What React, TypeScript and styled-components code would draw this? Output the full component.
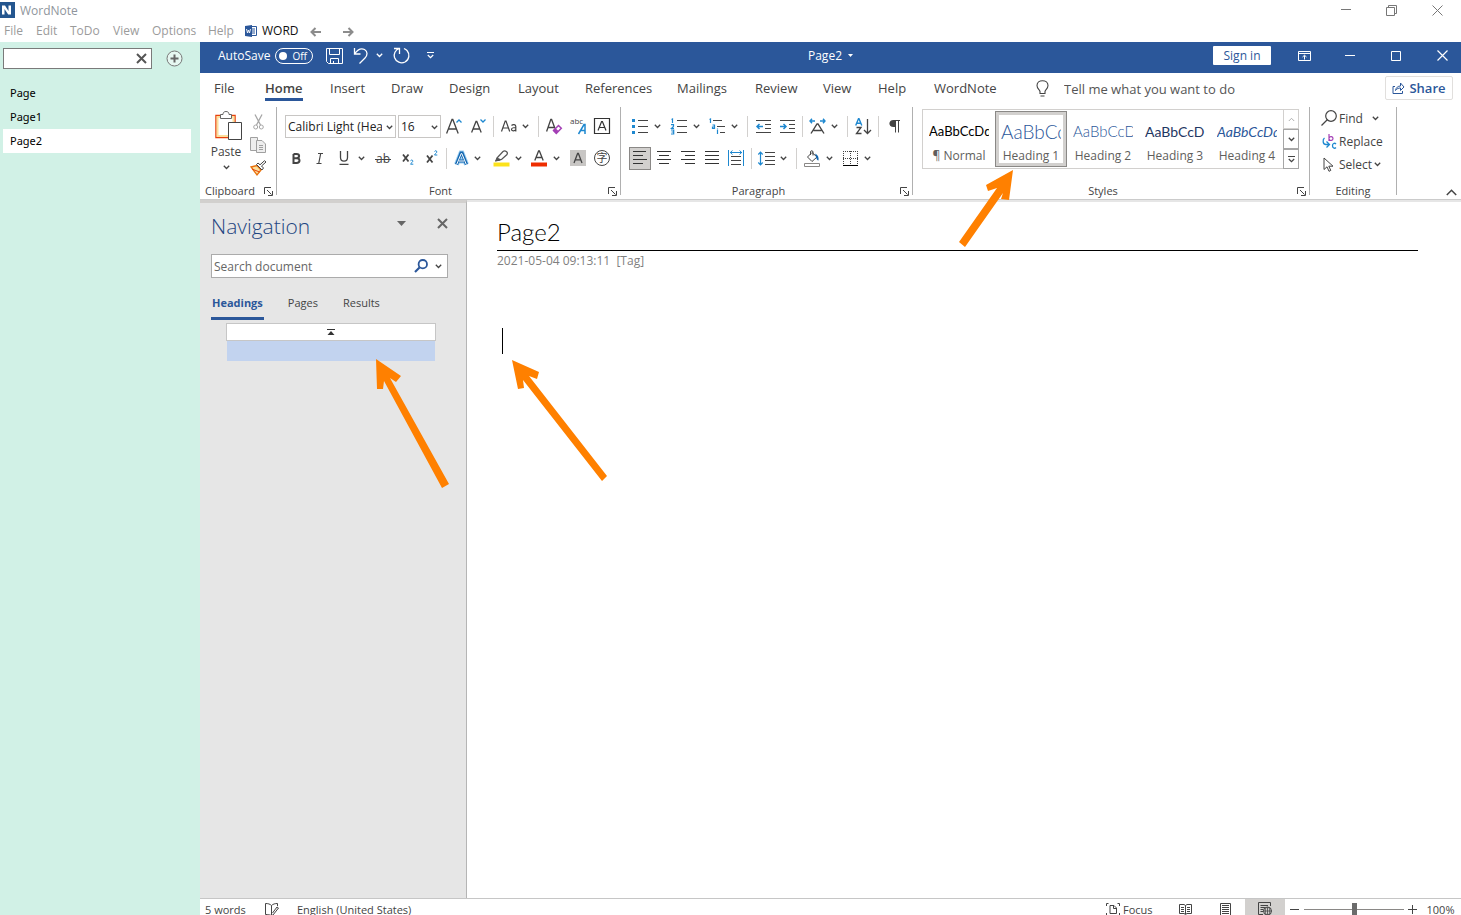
import React from "react";
import styled, { createGlobalStyle } from "styled-components";

const BLUE = "#2b579a";
const ACCENT = "#1e88d0";
const INK = "#444444";
const UI = '"Open Sans", "Noto Sans", sans-serif';
const DOC = 'Lato, "Open Sans", sans-serif';
const CJK = '"Noto Sans CJK SC", sans-serif';

const Global = createGlobalStyle`
  *, *::before, *::after { box-sizing: border-box; }
  body { margin: 0; font-family: ${UI}; font-size: 12px; color: ${INK}; background: #fff; }
  button, input, select { font: inherit; color: inherit; }
  svg { display: block; flex: none; overflow: visible; }
`;

const App_ = styled.div`
  display: flex;
  flex-direction: column;
  height: 100vh;
  overflow: hidden;
  position: relative;
`;

const PlainButton = styled.button`
  display: flex;
  align-items: center;
  border: 0;
  padding: 0;
  background: none;
  white-space: nowrap;
  flex: none;
`;

/* Outer window */
const OuterTitle = styled.header`
  display: flex;
  align-items: center;
  height: 20px;
  gap: 5px;
  color: #8f959c;
  background: #fff;
`;
const OuterControls = styled.div`
  display: flex;
  margin-left: auto;
  height: 18px;
`;
const WindowButton = styled(PlainButton)<{ $w: number }>`
  width: ${(p) => p.$w}px;
  height: 100%;
  justify-content: center;
`;
const MenuBar = styled.nav`
  display: flex;
  align-items: center;
  height: 22px;
  color: #9b9b9b;
  padding-left: 4px;
`;
const MenuItem = styled(PlainButton)<{ $w: number; $dark?: boolean }>`
  width: ${(p) => p.$w}px;
  gap: 5px;
  line-height: 18px;
  color: ${(p) => (p.$dark ? "#111" : "#9b9b9b")};
`;

const Body = styled.div`
  display: flex;
  flex: 1;
  min-height: 0;
`;

/* Page list */
const Sidebar = styled.aside`
  width: 200px;
  flex: none;
  background: #d1f1e6;
  padding: 6px 9px 0 3px;
  color: #000;
`;
const SideTop = styled.div`
  display: flex;
  align-items: center;
  gap: 14px;
  height: 21px;
`;
const SideSearch = styled.div`
  display: flex;
  align-items: center;
  width: 149px;
  height: 21px;
  border: 1px solid #7a7a7a;
  background: #fff;
  padding-right: 4px;
`;
const BareInput = styled.input`
  flex: 1;
  min-width: 0;
  border: 0;
  outline: 0;
  background: transparent;
  padding: 0 2px;
  &::placeholder { color: #666; opacity: 1; }
`;
const PageList = styled.ul`
  list-style: none;
  margin: 12px 0 0;
  padding: 0;
`;
const PageItem = styled.li<{ $on?: boolean }>`
  background: ${(p) => (p.$on ? "#fff" : "transparent")};
`;
const PageLink = styled.a`
  display: block;
  height: 24px;
  line-height: 24px;
  padding-left: 7px;
  font-family: "Noto Sans", sans-serif;
  font-size: 11px;
  color: #000;
  text-decoration: none;
`;

/* Word window */
const Word = styled.main`
  display: flex;
  flex-direction: column;
  flex: 1;
  min-width: 0;
  background: #fff;
`;
const TitleBar = styled.div`
  display: grid;
  grid-template-columns: 1fr auto 1fr;
  align-items: center;
  height: 31px;
  flex: none;
  background: ${BLUE};
  color: #fff;
  padding-bottom: 4px;
`;
const Quick = styled.div`
  display: flex;
  align-items: center;
  padding-left: 18px;
`;
const AutoSave = styled.label`
  display: flex;
  align-items: center;
  justify-content: space-between;
  width: 95px;
  margin-right: 8px;
`;
const Toggle = styled.span`
  display: flex;
  align-items: center;
  justify-content: space-between;
  width: 38px;
  height: 16px;
  padding: 0 5px 0 3px;
  border: 1px solid #fff;
  border-radius: 8px;
  font-size: 10px;
  line-height: 14px;
`;
const ToggleInput = styled.input`
  appearance: none;
  margin: 0;
  width: 8px;
  height: 8px;
  border-radius: 50%;
  background: #fff;
`;
const QuickButton = styled(PlainButton)<{ $w: number }>`
  width: ${(p) => p.$w}px;
  height: 26px;
  justify-content: center;
`;
const DocName = styled(PlainButton)`
  gap: 6px;
  color: #fff;
`;
const TitleRight = styled.div`
  display: flex;
  align-items: center;
  justify-content: flex-end;
  gap: 8px;
  height: 27px;
`;
const SignIn = styled(PlainButton)`
  justify-content: center;
  width: 58px;
  height: 19px;
  margin-right: 6px;
  border-radius: 1px;
  background: #fff;
  color: ${BLUE};
`;

const Tabs = styled.nav`
  display: flex;
  height: 31px;
  flex: none;
  padding: 0 8px 0 14px;
  font-size: 13px;
`;
const Tab = styled(PlainButton)<{ $w: number; $on?: boolean }>`
  width: ${(p) => p.$w}px;
  align-items: flex-start;
  font-weight: ${(p) => (p.$on ? 600 : 400)};
`;
const TabText = styled.span<{ $on?: boolean }>`
  height: 28px;
  line-height: 30px;
  border-bottom: 3px solid ${(p) => (p.$on ? BLUE : "transparent")};
`;
const TellMe = styled.label`
  display: flex;
  align-items: center;
  gap: 15px;
  flex: 1;
  height: 31px;
  padding-left: 21px;
`;
const TellInput = styled(BareInput)`
  padding: 0;
  &::placeholder { color: #555; }
`;
const Share = styled(PlainButton)`
  gap: 4px;
  justify-content: center;
  width: 68px;
  height: 24px;
  margin-top: 3px;
  border: 1px solid #e1dfdd;
  border-radius: 2px;
  color: ${BLUE};
  font-weight: 600;
`;

/* Ribbon */
const Ribbon = styled.section`
  display: flex;
  align-items: flex-start;
  flex: none;
  height: 96px;
  padding-top: 3px;
  border-bottom: 1px solid #cbcbcb;
`;
const Group = styled.div<{ $w: number }>`
  width: ${(p) => p.$w}px;
  height: 92px;
  flex: none;
  display: flex;
  flex-direction: column;
`;
const Divider = styled.div`
  width: 1px;
  height: 88px;
  flex: none;
  background: #b0b0b0;
`;
const GroupBody = styled.div<{ $pad: string }>`
  flex: 1;
  padding: ${(p) => p.$pad};
`;
const GroupFoot = styled.div`
  display: flex;
  align-items: center;
  height: 16px;
`;
const GroupName = styled.div`
  flex: 1;
  text-align: center;
  font-size: 11px;
  line-height: 16px;
`;
const Launcher = styled(PlainButton)`
  width: 16px;
  height: 16px;
  justify-content: center;
`;
const Row = styled.div`
  display: flex;
  align-items: center;
  height: 24px;
  margin-bottom: 8px;
`;
const Sep = styled.div`
  width: 1px;
  height: 21px;
  margin: 0 3px;
  flex: none;
  background: #d2d0ce;
`;
const Tool = styled(PlainButton)<{ $w?: number; $on?: boolean }>`
  justify-content: center;
  width: ${(p) => (p.$on ? 22 : p.$w ?? 24)}px;
  height: 23px;
  ${(p) => p.$on && "margin: 0 1px 0 2px; background: #d2d0ce; border: 1px solid #8a8886;"}
`;
const SplitBox = styled(PlainButton)<{ $w: number }>`
  width: ${(p) => p.$w}px;
  height: 23px;
`;
const SplitIcon = styled.span<{ $w: number }>`
  display: flex;
  justify-content: center;
  width: ${(p) => p.$w}px;
`;
const Combo = styled.span<{ $w: number }>`
  position: relative;
  display: block;
  flex: none;
  width: ${(p) => p.$w}px;
  height: 23px;
  margin-right: 2px;
  &:last-of-type { margin-right: 0; }
`;
const ComboSelect = styled.select`
  appearance: none;
  width: 100%;
  height: 23px;
  padding: 0 13px 0 2px;
  border: 1px solid #c8c6c4;
  border-radius: 0;
  background: #fff;
  color: #222;
`;
const ComboArrow = styled.span`
  position: absolute;
  right: 3px;
  top: 10px;
  pointer-events: none;
`;

const ClipRow = styled.div`
  display: flex;
  justify-content: space-between;
`;
const PasteButton = styled(PlainButton)`
  flex-direction: column;
  width: 32px;
  line-height: 16px;
`;
const PasteIcon = styled.span`
  padding-left: 4px;
`;
const PasteText = styled.span`
  margin: 3px 0 5px;
`;
const ClipTools = styled.div`
  display: flex;
  flex-direction: column;
`;

const Gallery = styled.div`
  display: flex;
  width: 377px;
  height: 60px;
  border: 1px solid #d2d0ce;
`;
const StyleItem = styled(PlainButton)<{ $on?: boolean }>`
  flex-direction: column;
  width: 72px;
  height: 56px;
  margin-top: 1px;
  padding: ${(p) => (p.$on ? "5px" : "6px")} 3px 0;
  color: #605e5c;
  overflow: hidden;
  ${(p) => p.$on && "border: 1px solid #8a8886; box-shadow: inset 0 0 0 3px #d2d0ce;"}
`;
const Sample = styled.span<{ $c: string; $size: number; $italic?: boolean; $light?: boolean }>`
  width: 60px;
  height: 30px;
  line-height: 29px;
  overflow: hidden;
  text-align: left;
  font-family: ${DOC};
  font-size: ${(p) => p.$size}px;
  font-style: ${(p) => (p.$italic ? "italic" : "normal")};
  font-weight: ${(p) => (p.$light ? 300 : 400)};
  color: ${(p) => p.$c};
`;
const SampleName = styled.span`
  line-height: 18px;
`;
const GalleryScroll = styled.div`
  display: flex;
  flex-direction: column;
  margin: -1px -1px -1px auto;
  width: 16px;
`;
const ScrollButton = styled(PlainButton)<{ $dim?: boolean }>`
  flex: 1;
  justify-content: center;
  border: 1px solid ${(p) => (p.$dim ? "#d2d0ce" : "#a6a6a6")};
`;
const EditButton = styled(PlainButton)`
  height: 22px;
  margin-bottom: 1px;
  gap: 2px;
`;
const EditIcon = styled.span`
  width: 16px;
  display: flex;
  justify-content: center;
`;
const EditText = styled.span<{ $gap: number }>`
  margin-right: ${(p) => p.$gap}px;
`;
const Collapse = styled(PlainButton)`
  margin: 82px 4px 0 auto;
`;

/* Panes */
const Panes = styled.div`
  display: flex;
  flex: 1;
  min-height: 0;
`;
const NavPane = styled.aside`
  width: 267px;
  flex: none;
  background: #e6e6e6;
  border-top: 3px solid #d2d0ce;
  border-right: 1px solid #b5b5b5;
  padding: 7px 18px 0 11px;
`;
const NavHead = styled.div`
  display: flex;
  align-items: center;
  height: 32px;
`;
const NavTitle = styled.h2`
  flex: 1;
  margin: 0;
  font-size: 21px;
  line-height: 32px;
  font-weight: 300;
  color: #1f4682;
`;
const NavButton = styled(PlainButton)<{ $w: number }>`
  width: ${(p) => p.$w}px;
  height: 24px;
  margin-bottom: 6px;
`;
const NavSearch = styled.div`
  display: flex;
  align-items: center;
  gap: 7px;
  height: 24px;
  margin-top: 12px;
  padding-right: 5px;
  border: 1px solid #ababab;
  background: #fff;
`;
const NavTabs = styled.div`
  display: flex;
  gap: 23px;
  margin-top: 10px;
`;
const NavTab = styled(PlainButton)<{ $on?: boolean }>`
  height: 32px;
  padding: 0 1px;
  font-size: 11px;
  color: ${(p) => (p.$on ? BLUE : INK)};
  font-weight: ${(p) => (p.$on ? 700 : 400)};
  border-bottom: 3px solid ${(p) => (p.$on ? BLUE : "transparent")};
`;
const Outline = styled.div`
  margin: 3px 12px 0 15px;
`;
const OutlineTop = styled(PlainButton)`
  justify-content: center;
  width: 100%;
  height: 18px;
  border: 1px solid #c6c6c6;
  background: #fff;
`;
const OutlineRow = styled.div`
  height: 20px;
  margin: 0 1px;
  background: #c2d3ef;
`;

const Doc = styled.article`
  flex: 1;
  border-top: 2px solid #e6e6e6;
  padding: 12px 43px 0 30px;
`;
const DocTitle = styled.h1`
  margin: 0;
  height: 37px;
  line-height: 36px;
  border-bottom: 1px solid #000;
  font-family: ${DOC};
  font-weight: 300;
  font-size: 24px;
  color: #000;
`;
const DocMeta = styled.p`
  margin: 2px 0 0;
  line-height: 16px;
  white-space: pre;
  color: #7f7f7f;
`;
const Caret = styled.div`
  width: 1px;
  height: 26px;
  margin: 59px 0 0 5px;
  background: #000;
`;

const Status = styled.footer`
  display: flex;
  align-items: flex-start;
  flex: none;
  height: 17px;
  border-top: 1px solid #c6c6c6;
  padding: 0 1px 0 5px;
  background: #fff;
  font-size: 11px;
  overflow: hidden;
`;
const StatusItem = styled(PlainButton)<{ $w: number; $on?: boolean; $center?: boolean }>`
  width: ${(p) => p.$w}px;
  height: 20px;
  gap: 3px;
  justify-content: ${(p) => (p.$center ? "center" : "flex-start")};
  background: ${(p) => (p.$on ? "#d2d0ce" : "none")};
`;
const StatusRight = styled.div`
  display: flex;
  margin-left: auto;
`;
const Zoom = styled.input`
  appearance: none;
  width: 100px;
  height: 20px;
  margin: 0;
  background: linear-gradient(#8a8886, #8a8886) center / 100% 1px no-repeat;
  &::-webkit-slider-thumb {
    appearance: none;
    width: 5px;
    height: 12px;
    background: #6b6b6b;
  }
`;

const ArrowLayer = styled.svg`
  position: absolute;
  pointer-events: none;
`;

/* Icons */
type LineProps = { w: number; h: number; d: string; c?: string; sw?: number; crisp?: boolean; children?: React.ReactNode };
const Ico = ({ w, h, d, c = INK, sw = 1, crisp, children }: LineProps) => (
  <svg width={w} height={h} viewBox={`0 0 ${w} ${h}`} fill="none" shapeRendering={crisp ? "crispEdges" : "auto"} aria-hidden>
    {d && <path d={d} stroke={c} strokeWidth={sw} />}
    {children}
  </svg>
);
const Chev = ({ c = INK }: { c?: string }) => <Ico w={7} h={5} d="M.8 .8 3.5 3.5 6.2 .8" c={c} sw={1.3} />;
const Split = ({ w, iw = 24, label, children }: { w: number; iw?: number; label: string; children: React.ReactNode }) => (
  <SplitBox $w={w} aria-label={label}>
    <SplitIcon $w={iw}>{children}</SplitIcon>
    <SplitIcon $w={10}><Chev /></SplitIcon>
  </SplitBox>
);
const Cross = ({ s, sw, c }: { s: number; sw: number; c: string }) => (
  <Ico w={s} h={s} d={`M1 1 ${s - 1} ${s - 1}M${s - 1} 1 1 ${s - 1}`} c={c} sw={sw} />
);
const Launch = ({ name }: { name: string }) => (
  <Launcher aria-label={`${name} settings`}>
    <Ico w={9} h={9} d="M.5 7V.5H7M3 3 7.5 7.5M8.5 4V8.5H4" />
  </Launcher>
);

const GLYPH: Record<string, string> = {
  A16: "M.6 15.5 6 1.5h.8L12.2 15.5M2.6 11H10",
  A13: "M.6 14.5 5 3.5h.8L10.2 14.5M2.2 11H8.6",
};

const Align = ({ lines }: { lines: [number, number][] }) => (
  <Ico w={16} h={14} d={lines.map(([a, b], i) => `M${a} ${0.5 + i * 4}H${b}`).join("")} c="#333" crisp />
);

const Foot = ({ name, launch = true }: { name: string; launch?: boolean }) => (
  <GroupFoot>
    <GroupName>{name}</GroupName>
    {launch && <Launch name={name} />}
  </GroupFoot>
);

const menus: [string, number][] = [["File", 32], ["Edit", 34], ["ToDo", 43], ["View", 39], ["Options", 56], ["Help", 37]];
const tabs: [string, number][] = [
  ["File", 51], ["Home", 65], ["Insert", 61], ["Draw", 58], ["Design", 69], ["Layout", 67],
  ["References", 92], ["Mailings", 78], ["Review", 68], ["View", 55], ["Help", 56], ["WordNote", 81],
];
const samples = [
  { name: "¶ Normal", c: "#000", size: 13, text: "AaBbCcDd" },
  { name: "Heading 1", c: BLUE, size: 19, text: "AaBbCc", light: true, on: true },
  { name: "Heading 2", c: BLUE, size: 15, text: "AaBbCcD", light: true },
  { name: "Heading 3", c: "#1f3763", size: 14, text: "AaBbCcD" },
  { name: "Heading 4", c: BLUE, size: 14, text: "AaBbCcDd", italic: true },
];
const arrows = [
  { x: 955, y: 165, w: 64, h: 86, p: "58,5 31,20 33,26 42,23 4,77 10,82 48,28 46,34 54,35" },
  { x: 370, y: 355, w: 84, h: 138, p: "6,4 31,21 26,27 20,23 79,129 72,133 14,26 13,34 7,34" },
  { x: 506, y: 354, w: 106, h: 132, p: "6,6 33,18 31,25 23,22 101,122 96,127 17,26 18,34 12,35" },
];

export default function App() {
  return (
    <App_>
      <Global />
      <OuterTitle>
        <svg width="15" height="16" viewBox="0 0 15 16" aria-hidden>
          <rect width="15" height="16" fill="#24568f" />
          <path d="M2 3.500H5L8.500 9V3.500H11V12.500H8.200L4.500 7V12.500H2Z" fill="#fff" />
        </svg>
        <span>WordNote</span>
        <OuterControls>
          <WindowButton $w={46} aria-label="Minimize"><Ico w={10} h={10} d="M0 4.500H10" c="#777" /></WindowButton>
          <WindowButton $w={45} aria-label="Restore"><Ico w={11} h={11} d="M.5 2.500H8.500V10.500H.5ZM2.500 2.500V.5H10.500V8.500H8.500" c="#777" /></WindowButton>
          <WindowButton $w={47} aria-label="Close"><Ico w={11} h={11} d="M.5 .5 10.500 10.500M10.500 .5 .5 10.500" c="#777" /></WindowButton>
        </OuterControls>
      </OuterTitle>
      <MenuBar>
        {menus.map(([m, w]) => <MenuItem key={m} $w={w}>{m}</MenuItem>)}
        <MenuItem $w={65} $dark>
          <svg width="12" height="12" viewBox="0 0 12 12" aria-hidden>
            <path d="M0 1 7 0V12L0 11Z" fill={BLUE} />
            <path d="M7 1.500H11.500V10.500H7M7 4H10M7 6H10M7 8H10" stroke={BLUE} fill="none" />
            <path d="M1.500 4 2.500 8 3.500 5 4.500 8 5.500 4" stroke="#fff" fill="none" strokeWidth=".9" />
          </svg>
          WORD
        </MenuItem>
        <MenuItem $w={33} aria-label="Back"><Ico w={11} h={10} d="M11 6H2M5.500 2 1.500 6 5.500 10" c="#8c8c8c" sw={2} /></MenuItem>
        <MenuItem $w={12} aria-label="Forward"><Ico w={11} h={10} d="M0 6H9M5.500 2 9.500 6 5.500 10" c="#8c8c8c" sw={2} /></MenuItem>
      </MenuBar>

      <Body>
        <Sidebar>
          <SideTop>
            <SideSearch>
              <BareInput aria-label="Filter pages" />
              <PlainButton aria-label="Clear"><Cross s={11} sw={2} c="#555" /></PlainButton>
            </SideSearch>
            <PlainButton aria-label="Add page">
              <Ico w={17} h={17} d="">
                <circle cx="8.500" cy="8.500" r="7.500" stroke="#777" fill="#e6f7f1" />
                <path d="M4.500 8.500H12.500M8.500 4.500V12.500" stroke="#666" strokeWidth="2" />
              </Ico>
            </PlainButton>
          </SideTop>
          <PageList>
            {["Page", "Page1", "Page2"].map((p) => (
              <PageItem key={p} $on={p === "Page2"}><PageLink href="#">{p}</PageLink></PageItem>
            ))}
          </PageList>
        </Sidebar>

        <Word>
          <TitleBar>
            <Quick>
              <AutoSave>
                AutoSave
                <Toggle><ToggleInput type="checkbox" />Off</Toggle>
              </AutoSave>
              <QuickButton $w={26} aria-label="Save">
                <Ico w={17} h={16} d="M.5 .5H16.500V15.500H2.500L.5 13.500ZM3.500 .5V6.500H13.500V.5M4.500 15.500V10.500H12.500V15.500M7.500 13V15.500" c="#fff" />
              </QuickButton>
              <QuickButton $w={29} aria-label="Undo">
                <Ico w={17} h={17} d="M1.500 1V7H7.500M1.500 7C5 2 8.500 1 11.500 2.500 15 4.500 14.500 8.500 12 11L6.500 16.500" c="#fff" sw={1.3} />
              </QuickButton>
              <Chev c="#fff" />
              <QuickButton $w={36} aria-label="Redo">
                <Ico w={17} h={17} d="M1 1.500H6.500V7M6.500 1.500C2 3 .5 7 1.500 10.500 3 15 8 17 12 15 16.500 12.500 17 7 14 3.500 13 2.500 12 2 11 1.500" c="#fff" sw={1.3} />
              </QuickButton>
              <QuickButton $w={22} aria-label="Customize toolbar">
                <Ico w={7} h={7} d="M0 .5H7M.8 3 3.500 5.700 6.200 3" c="#fff" sw={1.2} />
              </QuickButton>
            </Quick>
            <DocName>
              Page2
              <svg width="5" height="3" viewBox="0 0 5 3" aria-hidden><path d="M0 0H5L2.500 3Z" fill="#fff" /></svg>
            </DocName>
            <TitleRight>
              <SignIn>Sign in</SignIn>
              <WindowButton $w={38} aria-label="Ribbon display options">
                <Ico w={13} h={10} d="M.5 .5H12.500V9.500H.5ZM.5 2.500H12.500M6.500 8.500V4.500M4.500 6 6.500 4.200 8.500 6" c="#fff" />
              </WindowButton>
              <WindowButton $w={38} aria-label="Minimize window"><Ico w={10} h={10} d="M0 4.500H10" c="#fff" /></WindowButton>
              <WindowButton $w={38} aria-label="Maximize window"><Ico w={10} h={10} d="M.5 .5H9.500V9.500H.5Z" c="#fff" /></WindowButton>
              <WindowButton $w={38} aria-label="Close window"><Ico w={11} h={11} d="M.5 .5 10.500 10.500M10.500 .5 .5 10.500" c="#fff" sw={1.2} /></WindowButton>
            </TitleRight>
          </TitleBar>

          <Tabs>
            {tabs.map(([t, w]) => (
              <Tab key={t} $w={w} $on={t === "Home"}><TabText $on={t === "Home"}>{t}</TabText></Tab>
            ))}
            <TellMe>
              <Ico w={13} h={17} d="M4 13.500V11.500C3.500 9.500 1 8.500 1 5.500 1 2.500 3.500 .7 6.500 .7S12 2.500 12 5.500C12 8.500 9.500 9.500 9 11.500V13.500ZM4.500 16H8.500" sw={1.1} />
              <TellInput placeholder="Tell me what you want to do" />
            </TellMe>
            <Share>
              <Ico w={13} h={12} d="M3 4.500H1V11.500H10.500V9M3.500 8.500C4 5.500 6 4 8.500 4V1L12 5 8.500 8.500V6C6.500 6 5 6.500 3.500 8.500Z" c={BLUE} />
              Share
            </Share>
          </Tabs>

          <Ribbon>
            <Group $w={76}>
              <GroupBody $pad="3px 6px 0 10px">
                <ClipRow>
                  <PasteButton>
                    <PasteIcon>
                      <svg width="27" height="31" viewBox="0 0 27 31" fill="none" aria-hidden>
                        <path d="M6 5.500H1V27.500H14M16 5.500H20V12" stroke="#e8410c" strokeWidth="1.500" />
                        <path d="M6 7H2.500V26H13M16 7H18.500V12" stroke="#fbdf9c" strokeWidth="2" />
                        <path d="M5.500 8.500V4.500H8C8 2.500 9 1.500 11 1.500S14 2.500 14 4.500H16.500V8.500Z" fill="#fff" stroke="#666" />
                        <path d="M13.500 12.500H26.500V29.500H13.500Z" fill="#fff" stroke="#444" />
                      </svg>
                    </PasteIcon>
                    <PasteText>Paste</PasteText>
                    <Chev />
                  </PasteButton>
                  <ClipTools>
                    <Tool aria-label="Cut">
                      <Ico w={11} h={16} d="M2 .5 7.500 11M9 .5 3.500 11" c="#a6a6a6" sw={1.3}>
                        <circle cx="2.700" cy="13" r="2" stroke="#a6a6a6" /><circle cx="8.300" cy="13" r="2" stroke="#a6a6a6" />
                      </Ico>
                    </Tool>
                    <Tool aria-label="Copy">
                      <Ico w={17} h={16} d="">
                        <path d="M.5 .5H7.500V13.500H.5Z" fill="#eee" stroke="#a0a0a0" />
                        <path d="M6.500 3.500H12L15.500 7V15.500H6.500Z" fill="#eee" stroke="#a0a0a0" />
                        <path d="M9 8.500H13M9 10.500H13M9 12.500H13" stroke="#a0a0a0" />
                      </Ico>
                    </Tool>
                    <Tool aria-label="Format painter">
                      <Ico w={17} h={16} d="">
                        <path d="M1 7 7 5.500 11 10 7 15Z" fill="#fbdf9c" stroke="#e8710c" strokeWidth="1.300" />
                        <path d="M2 9 9.500 12" stroke="#e8410c" />
                        <path d="M6.500 4.500 12 10 13.500 8 11.500 6 16 2 14.500 .7 10 4.800 8 3Z" fill="#fff" stroke="#444" />
                      </Ico>
                    </Tool>
                  </ClipTools>
                </ClipRow>
              </GroupBody>
              <Foot name="Clipboard" />
            </Group>
            <Divider />

            <Group $w={343}>
              <GroupBody $pad="7px 0 0 8px">
                <Row>
                  <Combo $w={111}>
                    <ComboSelect aria-label="Font"><option>Calibri Light (Headings)</option></ComboSelect>
                    <ComboArrow><Chev /></ComboArrow>
                  </Combo>
                  <Combo $w={43}>
                    <ComboSelect aria-label="Font size"><option>16</option></ComboSelect>
                    <ComboArrow><Chev /></ComboArrow>
                  </Combo>
                  <Tool $w={25} aria-label="Grow font">
                    <Ico w={16} h={17} d={GLYPH.A16} sw={1.3}><path d="M10.500 4.500 13 2 15.500 4.500" stroke={ACCENT} strokeWidth="1.300" /></Ico>
                  </Tool>
                  <Tool aria-label="Shrink font">
                    <Ico w={15} h={16} d={GLYPH.A13} sw={1.3}><path d="M9.500 1.500 12 4 14.500 1.500" stroke={ACCENT} strokeWidth="1.300" /></Ico>
                  </Tool>
                  <Sep />
                  <Split w={38} iw={23} label="Change case">
                    <Ico w={16} h={12} d="M.5 11.500 4.200 1H5L8.700 11.500M2 8H7.200M10.500 5.500C12 4 14.800 4.300 14.800 6.500V11.500M14.800 7.500C12 7.500 10.500 8 10.500 9.500S13.500 11.500 14.800 9.500" sw={1.2} />
                  </Split>
                  <Sep />
                  <Tool aria-label="Clear formatting">
                    <Ico w={16} h={17} d="M.6 13.500 4.800 1.500H5.600L9 10.500M2 9.500H8" sw={1.3}>
                      <path d="M7.500 12.500 12.500 7.500 15.300 10.200 10.300 15.500Z" fill="#fff" stroke="#a33fb5" strokeWidth="1.500" />
                      <path d="M7 12.500 9.500 10.200 12.500 13 10.300 15.800Z" fill="#a33fb5" />
                    </Ico>
                  </Tool>
                  <Tool aria-label="Phonetic guide">
                    <svg width="17" height="17" viewBox="0 0 17 17" fill="none" aria-hidden>
                      <text x="0" y="6" fontSize="8" fill={INK} fontFamily="Open Sans">abc</text>
                      <path d="M8.500 16 14 6.500H15V16M10.500 12.500H15" stroke={ACCENT} strokeWidth="1.500" />
                    </svg>
                  </Tool>
                  <Tool aria-label="Character border">
                    <Ico w={16} h={16} d="M.5 .5H15.500V15.500H.5ZM4 12.500 7.600 3.500H8.400L12 12.500M5.500 9.500H10.500" c="#333" sw={1.2} />
                  </Tool>
                </Row>
                <Row>
                  <Tool $w={22} aria-label="Bold">
                    <Ico w={9} h={11} d="M1.500 1H4.500C8 1 8 5.200 4.500 5.200H1.500M4.500 5.200C8.500 5.200 8.500 10 4.500 10H1.500V1" sw={2} />
                  </Tool>
                  <Tool $w={25} aria-label="Italic"><Ico w={8} h={11} d="M2 .5H7M.5 10.500H5.500M4.700 .5 2.700 10.500" sw={1.2} /></Tool>
                  <Split w={39} label="Underline"><Ico w={10} h={14} d="M1.500 0V6.500C1.500 11.200 8.500 11.200 8.500 6.500V0M.5 13.300H9.500" sw={1.3} /></Split>
                  <Tool aria-label="Strikethrough">
                    <svg width="16" height="14" viewBox="0 0 16 14" fill="none" aria-hidden>
                      <text x="1" y="12" fontSize="12" fill={INK} fontFamily="Open Sans">ab</text>
                      <path d="M0 8.500H16" stroke={INK} />
                    </svg>
                  </Tool>
                  <Tool $w={26} aria-label="Subscript">
                    <Ico w={12} h={14} d="M1 3.500 6.500 10.500M6.500 3.500 1 10.500" sw={1.8}>
                      <path d="M8.500 9.700C9 8.700 11 8.800 10.800 10.200 10.700 11.200 9 12 8.500 13.200H11.300" stroke={ACCENT} />
                    </Ico>
                  </Tool>
                  <Tool $w={22} aria-label="Superscript">
                    <Ico w={12} h={16} d="M1 5.500 6.500 12.500M6.500 5.500 1 12.500" sw={1.8}>
                      <path d="M8.500 1.500C9 .4 11 .5 10.800 2 10.700 3 9 3.700 8.500 5H11.300" stroke={ACCENT} />
                    </Ico>
                  </Tool>
                  <Sep />
                  <Split w={39} iw={22} label="Text effects">
                    <Ico w={15} h={15} d="M2.500 13.500 7 2H8L12.500 13.500M4 10H11" c="#9fd0f3" sw={5}>
                      <path d="M2.500 13.500 7 2H8L12.500 13.500M4 10H11" stroke="#1467b0" strokeWidth="3.200" />
                      <path d="M2.700 13.500 7.200 2.500H7.800L12.300 13.500M5 10H10" stroke="#fff" strokeWidth="1" />
                    </Ico>
                  </Split>
                  <Split w={38} label="Highlight color">
                    <Ico w={17} h={17} d="">
                      <path d="M4 8 10 1.500C12 0 15.500 2 14 4.500L8.500 9.500 3 11Z" stroke="#555" strokeWidth="1.200" />
                      <path d="M4 7.500 8.500 9.500 6 11H2Z" fill="#555" />
                      <path d="M.5 12.500H16.500V16.500H.5Z" fill="#fce21c" />
                    </Ico>
                  </Split>
                  <Split w={39} label="Font color">
                    <Ico w={16} h={17} d="M3.800 10.500 7.600 1H8.400L12.200 10.500M5.300 7.500H10.700" sw={1.3}><path d="M0 12.500H16V16.500H0Z" fill="#ee2d00" /></Ico>
                  </Split>
                  <Tool aria-label="Character shading">
                    <Ico w={16} h={16} d=""><path d="M0 0H16V16H0Z" fill="#c8c6c4" /><path d="M4 13 7.600 3.500H8.400L12 13M5.500 9.800H10.500" stroke={INK} strokeWidth="1.300" /></Ico>
                  </Tool>
                  <Tool aria-label="Enclose characters">
                    <svg width="16" height="16" viewBox="0 0 16 16" fill="none" aria-hidden>
                      <circle cx="8" cy="8" r="7.500" stroke={INK} />
                      <text x="8" y="12" textAnchor="middle" fontSize="11" fill={INK} style={{ fontFamily: CJK }}>字</text>
                    </svg>
                  </Tool>
                </Row>
              </GroupBody>
              <Foot name="Font" />
            </Group>
            <Divider />

            <Group $w={291}>
              <GroupBody $pad="7px 0 0 6px">
                <Row>
                  <Split w={39} iw={25} label="Bullets">
                    <Ico w={16} h={15} d="M6 1.500H16M6 7.500H16M6 13.500H16" crisp><path d="M0 0H3V3H0ZM0 6H3V9H0ZM0 12H3V15H0Z" fill={ACCENT} /></Ico>
                  </Split>
                  <Split w={39} iw={25} label="Numbering">
                    <Ico w={16} h={17} d="M6 2.500H16M6 8.500H16M6 14.500H16">
                      <path d="M.5 1.500 1.500 1V5M0 6.700H2.500V8.300L.5 10.300H3M0 12H2.700V16H0M.5 14H2.700" stroke={ACCENT} strokeWidth="1.200" />
                    </Ico>
                  </Split>
                  <Split w={39} label="Multilevel list">
                    <Ico w={16} h={16} d="M4 2.500H13M8 8.500H16M11 14.500H16">
                      <path d="M.5 1.500 1.500 1V5M3.500 7H5.500V10.500H3.500V9H5.500M8.500 12V16M8.500 10.500V11.500" stroke={ACCENT} strokeWidth="1.200" />
                    </Ico>
                  </Split>
                  <Sep />
                  <Tool aria-label="Decrease indent">
                    <Ico w={15} h={13} d="M0 .5H15M9 4.500H15M9 8.500H15M0 12.500H15"><path d="M1 6.500H7M3.500 4 1 6.500 3.500 9" stroke={ACCENT} strokeWidth="1.500" /></Ico>
                  </Tool>
                  <Tool aria-label="Increase indent">
                    <Ico w={15} h={13} d="M0 .5H15M9 4.500H15M9 8.500H15M0 12.500H15"><path d="M0 6.500H6M3.500 4 6 6.500 3.500 9" stroke={ACCENT} strokeWidth="1.500" /></Ico>
                  </Tool>
                  <Sep />
                  <Split w={38} iw={23} label="Asian layout">
                    <Ico w={17} h={16} d="M2 15.500 8 6H9L15 15.500M4.500 12.500H12.500" sw={1.4}>
                      <path d="M1 3H6M3 .7 1 3 3 5.300M11 3H16M14 .7 16 3 14 5.300" stroke={ACCENT} strokeWidth="1.400" />
                    </Ico>
                  </Split>
                  <Sep />
                  <Tool aria-label="Sort">
                    <Ico w={17} h={17} d="M1.500 9.500H6L1.500 15.500H6.500M12.500 1V15M9 12 12.500 15.500 16 12" sw={1.3}>
                      <path d="M.7 7.500 3.500 .7H4L6.800 7.500M2 5.300H5.500" stroke={ACCENT} strokeWidth="1.400" />
                    </Ico>
                  </Tool>
                  <Sep />
                  <Tool aria-label="Show marks">
                    <Ico w={11} h={13} d="M5.500 .5H11M6.500 0V12.500M9.500 0V12.500"><path d="M6 0H4.500C-1 0-1 7 4.500 7H6Z" fill={INK} /></Ico>
                  </Tool>
                </Row>
                <Row>
                  <Tool $on aria-label="Align left"><Align lines={[[1, 14], [1, 11], [1, 15], [1, 11]]} /></Tool>
                  <Tool aria-label="Center"><Align lines={[[1, 15], [3, 13], [1, 15], [3, 13]]} /></Tool>
                  <Tool aria-label="Align right"><Align lines={[[1, 15], [5, 15], [1, 15], [5, 15]]} /></Tool>
                  <Tool aria-label="Justify"><Align lines={[[1, 15], [1, 15], [1, 15], [1, 15]]} /></Tool>
                  <Tool aria-label="Distribute">
                    <Ico w={16} h={16} d="M3 6.500H13M3 10.500H13M3 14.500H13">
                      <path d="M.5 0V16M15.500 0V16M2 2.500H14M4.500 .5 2.300 2.500 4.500 4.500M11.500 .5 13.700 2.500 11.500 4.500" stroke={ACCENT} />
                    </Ico>
                  </Tool>
                  <Sep />
                  <Split w={38} iw={23} label="Line spacing">
                    <Ico w={17} h={15} d="M7 1.500H17M7 5.500H17M7 9.500H17M7 13.500H17">
                      <path d="M2.500 1V14M.3 3.500 2.500 1.200 4.700 3.500M.3 11.500 2.500 13.800 4.700 11.500" stroke={ACCENT} strokeWidth="1.200" />
                    </Ico>
                  </Split>
                  <Sep />
                  <Split w={39} label="Shading">
                    <Ico w={16} h={17} d="M.5 13.500H15.500V16.500H.5Z" c="#8a8886">
                      <path d="M8 2.500 13 7 8 11.500 3.500 7ZM6.500 5V2C6.500 .3 9 .3 9 2V5.500" stroke={INK} />
                      <path d="M11 3.500C14 5 15 7 14.500 10.500 12 10 12.500 7 11 3.500Z" fill="#1467b0" />
                    </Ico>
                  </Split>
                  <Split w={34} iw={23} label="Borders">
                    <Ico w={15} h={15} d="M0 14.500H15" c="#000" crisp>
                      <path d="M0 .5H15M.5 0V14M14.500 0V14M7.500 0V14M0 7.500H15" stroke={INK} strokeDasharray="1 1" />
                    </Ico>
                  </Split>
                </Row>
              </GroupBody>
              <Foot name="Paragraph" />
            </Group>
            <Divider />

            <Group $w={396}>
              <GroupBody $pad="2px 0 0 9px">
                <Gallery>
                  {samples.map((s) => (
                    <StyleItem key={s.name} $on={s.on}>
                      <Sample $c={s.c} $size={s.size} $italic={s.italic} $light={s.light}>{s.text}</Sample>
                      <SampleName>{s.name}</SampleName>
                    </StyleItem>
                  ))}
                  <GalleryScroll>
                    <ScrollButton $dim aria-label="Previous styles"><Ico w={7} h={5} d="M.8 4 3.500 1.300 6.200 4" c="#b0b0b0" /></ScrollButton>
                    <ScrollButton aria-label="Next styles"><Chev /></ScrollButton>
                    <ScrollButton aria-label="More styles"><Ico w={7} h={7} d="M0 .5H7M.8 3 3.500 5.700 6.200 3" sw={1.2} /></ScrollButton>
                  </GalleryScroll>
                </Gallery>
              </GroupBody>
              <Foot name="Styles" />
            </Group>
            <Divider />

            <Group $w={86}>
              <GroupBody $pad="0 0 0 11px">
                <EditButton>
                  <EditIcon><Ico w={16} h={16} d="M.5 15.500 6.500 9.500" sw={1.2}><circle cx="10" cy="6" r="5.300" stroke={INK} strokeWidth="1.200" /></Ico></EditIcon>
                  <EditText $gap={7}>Find</EditText><Chev />
                </EditButton>
                <EditButton>
                  <EditIcon>
                    <Ico w={15} h={17} d="">
                      <path d="M7 1V8M7 5C8 2.800 11 3.500 11 5.500S8 8.500 7 6" stroke="#a33fb5" strokeWidth="1.200" />
                      <path d="M14 11C12.500 9.500 10.500 10.500 10.500 12.700S12.500 16 14 14.500M2.500 5C.5 6.500 .5 11.500 4 11.500H7M4.500 8.500 7.500 11.500 4.500 14.500" stroke={ACCENT} strokeWidth="1.300" />
                    </Ico>
                  </EditIcon>
                  <EditText $gap={0}>Replace</EditText>
                </EditButton>
                <EditButton>
                  <EditIcon><Ico w={13} h={15} d="M1 1V12.500L4 9.800 6 14.300 7.800 13.400 5.800 9.200H10Z" /></EditIcon>
                  <EditText $gap={0}>Select</EditText><Chev />
                </EditButton>
              </GroupBody>
              <Foot name="Editing" launch={false} />
            </Group>
            <Divider />
            <Collapse aria-label="Collapse ribbon"><Ico w={11} h={7} d="M.8 6 5.500 1.300 10.200 6" sw={1.5} /></Collapse>
          </Ribbon>

          <Panes>
            <NavPane>
              <NavHead>
                <NavTitle>Navigation</NavTitle>
                <NavButton $w={41} aria-label="Pane options">
                  <svg width="11" height="5" viewBox="0 0 11 5" aria-hidden><path d="M1 0H10L5.500 5Z" fill="#666" /></svg>
                </NavButton>
                <NavButton $w={11} aria-label="Close pane"><Cross s={11} sw={2} c="#666" /></NavButton>
              </NavHead>
              <NavSearch>
                <BareInput placeholder="Search document" aria-label="Search document" />
                <PlainButton aria-label="Search">
                  <Ico w={14} h={14} d="M1 13 5.500 8.500" c={BLUE} sw={2.2}><circle cx="8.800" cy="5.200" r="4.200" stroke={BLUE} strokeWidth="1.800" /></Ico>
                </PlainButton>
                <PlainButton aria-label="Search options"><Chev /></PlainButton>
              </NavSearch>
              <NavTabs>
                <NavTab $on>Headings</NavTab>
                <NavTab>Pages</NavTab>
                <NavTab>Results</NavTab>
              </NavTabs>
              <Outline>
                <OutlineTop aria-label="Jump to beginning">
                  <Ico w={8} h={7} d="M0 .5H8" c="#333"><path d="M4 2 7.500 6H.5Z" fill="#333" /></Ico>
                </OutlineTop>
                <OutlineRow />
              </Outline>
            </NavPane>
            <Doc>
              <DocTitle>Page2</DocTitle>
              <DocMeta>{"2021-05-04 09:13:11  [Tag]"}</DocMeta>
              <Caret />
            </Doc>
          </Panes>

          <Status>
            <StatusItem $w={60}>5 words</StatusItem>
            <StatusItem $w={32} aria-label="Proofing">
              <Ico w={15} h={13} d="M6.500 2.500C5 1 3 .5 .5 .5V11.500C3 11.500 5 12 6.500 12.500M6.500 2.500V12.500M6.500 2.500C8 1 10 .5 12.500 .5V3M6.500 12.500 8 12 13.500 5 12 4 7.500 10" />
            </StatusItem>
            <StatusItem $w={140}>English (United States)</StatusItem>
            <StatusRight>
              <StatusItem $w={59}>
                <Ico w={14} h={13} d="M2.500 .5H.5V3M.5 10V12.500H2.500M11.500 .5H13.500V3M13.500 10V12.500H11.500M4 2.500H8L10.500 5V10.500H4ZM7.500 2.500V5.500H10.500" />
                Focus
              </StatusItem>
              <StatusItem $w={40} $center aria-label="Read mode">
                <Ico w={13} h={12} d="M.5 1.500H5L6.500 2.500 8 1.500H12.500V10.500H8L6.500 11.500 5 10.500H.5ZM6.500 2.500V11M2 4.500H5M2 6.500H5M2 8.500H5M8 4.500H11M8 6.500H11M8 8.500H11" />
              </StatusItem>
              <StatusItem $w={40} $center aria-label="Print layout">
                <Ico w={11} h={13} d="M.5 .5H10.500V12.500H.5ZM2 2.500H9M2 4.500H9M2 6.500H9M2 8.500H9M2 10.500H9" />
              </StatusItem>
              <StatusItem $w={40} $on $center aria-label="Web layout">
                <Ico w={14} h={14} d="M5 12.500H.5V.5H12.500V4M2.500 3.500H10M2.500 5.500H7M2.500 7.500H5.500M2.500 9.500H5">
                  <circle cx="9.500" cy="9" r="4" stroke={INK} fill="#d2d0ce" /><path d="M5.500 9H13.500M9.500 5V13M8 5.500C7 8 7 10 8 12.500M11 5.500C12 8 12 10 11 12.500" stroke={INK} strokeWidth=".8" />
                </Ico>
              </StatusItem>
              <StatusItem $w={19} $center aria-label="Zoom out"><Ico w={9} h={9} d="M0 4.500H9" /></StatusItem>
              <Zoom type="range" min={0} max={100} defaultValue={50} aria-label="Zoom" />
              <StatusItem $w={17} $center aria-label="Zoom in"><Ico w={9} h={9} d="M0 4.500H9M4.500 0V9" /></StatusItem>
              <StatusItem $w={39} $center>100%</StatusItem>
            </StatusRight>
          </Status>
        </Word>
      </Body>
      {arrows.map((a) => (
        <ArrowLayer key={a.x} width={a.w} height={a.h} style={{ left: a.x, top: a.y }} aria-hidden>
          <polygon points={a.p} fill="#ff8000" />
        </ArrowLayer>
      ))}
    </App_>
  );
}
